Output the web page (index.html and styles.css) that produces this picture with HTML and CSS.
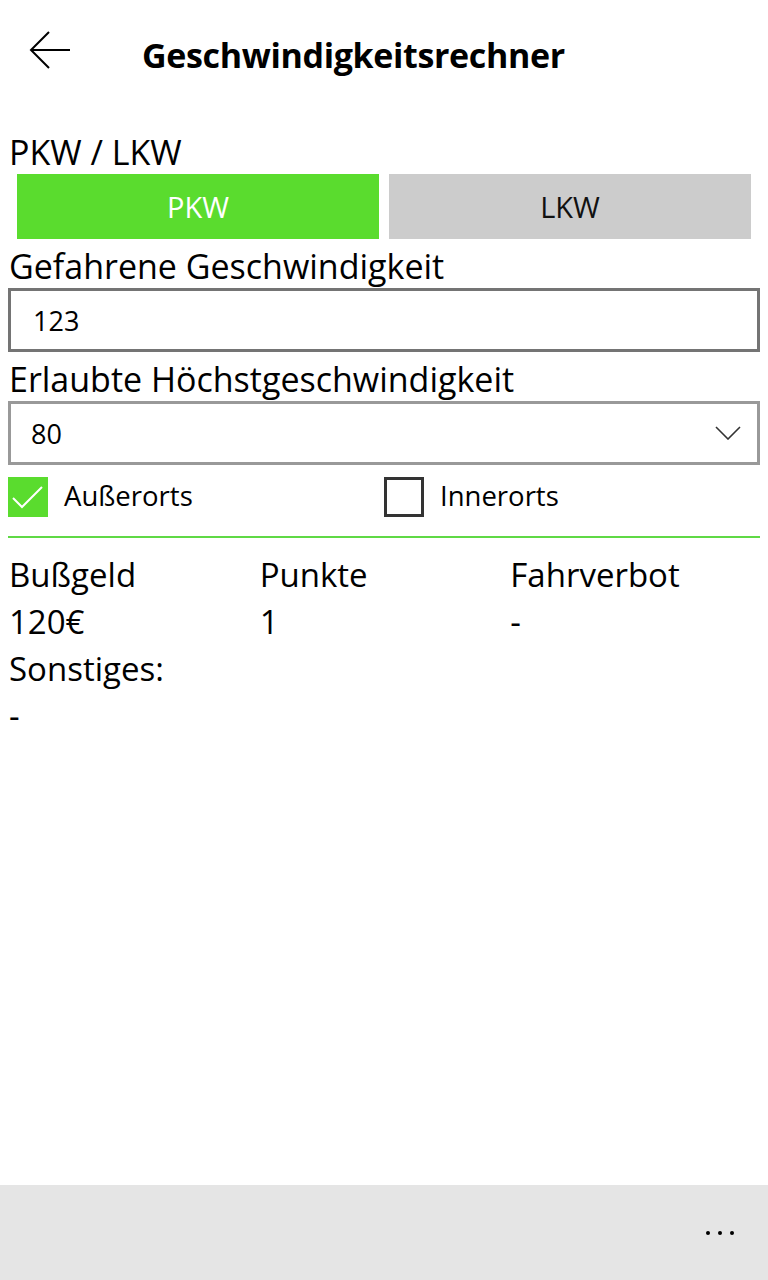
FILE: index.html
```html
<!DOCTYPE html>
<html lang="de">
<head>
<meta charset="utf-8">
<title>Geschwindigkeitsrechner</title>
<link rel="stylesheet" href="styles.css">
</head>
<body>
<div class="page">
  <header class="header">
    <svg class="back" width="42" height="38" viewBox="0 0 42 38" aria-hidden="true">
      <path d="M41 19 H2 M20 1 L2 19 L20 37" fill="none" stroke="#000" stroke-width="2"/>
    </svg>
    <h1 class="title">Geschwindigkeitsrechner</h1>
  </header>

  <main class="content">
    <div class="label">PKW / LKW</div>
    <div class="toggle">
      <div class="btn btn-active">PKW</div>
      <div class="btn">LKW</div>
    </div>

    <div class="label">Gefahrene Geschwindigkeit</div>
    <div class="field field-focus">123</div>

    <div class="label">Erlaubte Höchstgeschwindigkeit</div>
    <div class="field field-select">
      <span>80</span>
      <svg class="chev" width="26" height="14" viewBox="0 0 26 14" aria-hidden="true">
        <path d="M1 1 L13 13 L25 1" fill="none" stroke="#333" stroke-width="1.6"/>
      </svg>
    </div>

    <div class="checks">
      <div class="check">
        <span class="box box-on">
          <svg width="40" height="40" viewBox="0 0 40 40" aria-hidden="true">
            <path d="M5 21 L14 30 L34 10" fill="none" stroke="#fff" stroke-width="2"/>
          </svg>
        </span>
        <span class="check-text">Außerorts</span>
      </div>
      <div class="check">
        <span class="box box-off"></span>
        <span class="check-text">Innerorts</span>
      </div>
    </div>

    <div class="divider"></div>

    <div class="results">
      <div class="cell">Bußgeld</div>
      <div class="cell">Punkte</div>
      <div class="cell">Fahrverbot</div>
      <div class="cell">120€</div>
      <div class="cell">1</div>
      <div class="cell">-</div>
    </div>
    <div class="cell">Sonstiges:</div>
    <div class="cell">-</div>
  </main>

  <footer class="appbar">
    <span class="dots"><i></i><i></i><i></i></span>
  </footer>
</div>
</body>
</html>
```

FILE: styles.css
```css
html, body {
  margin: 0;
  padding: 0;
  background: #fff;
}

body {
  font-family: "Open Sans", "Noto Sans", sans-serif;
  color: #000;
}

.page {
  height: 1280px;
  display: flex;
  flex-direction: column;
}

.header {
  height: 100px;
  display: flex;
  align-items: flex-start;
  box-sizing: border-box;
}

.back {
  margin: 31px 0 0 29px;
  flex: none;
}

.title {
  margin: 37px 0 0 71px;
  font-size: 34px;
  line-height: 36px;
  font-weight: 700;
  letter-spacing: -0.35px;
}

.content {
  flex: 1;
  padding: 34px 8px 0 8px;
}

.label {
  font-size: 34px;
  line-height: 36px;
  padding-left: 1px;
}

.toggle {
  display: flex;
  gap: 10px;
  margin: 4px 9px 9px 9px;
}

.btn {
  flex: 1;
  height: 65px;
  background: #cccccc;
  color: #111;
  font-size: 29px;
  display: flex;
  align-items: center;
  justify-content: center;
}

.btn-active {
  background: #5adc2e;
  color: #fff;
}

.field {
  margin: 4px 0 9px 0;
  height: 64px;
  box-sizing: border-box;
  border: 3px solid #999;
  display: flex;
  align-items: center;
  padding: 0 16px 0 22px;
  font-size: 27px;
}

.field-focus {
  border-color: #747474;
}

.field-select {
  justify-content: space-between;
  padding-left: 20px;
}

.chev {
  flex: none;
}

.checks {
  display: flex;
  margin-top: 12px;
  height: 40px;
}

.check {
  flex: 1;
  display: flex;
  align-items: center;
  gap: 16px;
}

.box {
  width: 40px;
  height: 40px;
  box-sizing: border-box;
  flex: none;
}

.box-on {
  background: #5adc2e;
}

.box-on svg {
  display: block;
}

.box-off {
  border: 3px solid #333;
}

.check-text {
  font-size: 27.5px;
  margin-bottom: 4px;
}

.divider {
  margin-top: 19px;
  height: 2px;
  background: #5fd945;
}

.results {
  margin-top: 13px;
  display: grid;
  grid-template-columns: repeat(3, 1fr);
}

.cell {
  font-size: 33px;
  line-height: 47px;
  padding-left: 1px;
}

.appbar {
  height: 95px;
  background: #e5e5e5;
  display: flex;
  justify-content: flex-end;
  align-items: flex-start;
}

.dots {
  display: flex;
  gap: 8px;
  margin: 46px 34px 0 0;
}

.dots i {
  display: block;
  width: 4px;
  height: 4px;
  border-radius: 50%;
  background: #000;
}
```
